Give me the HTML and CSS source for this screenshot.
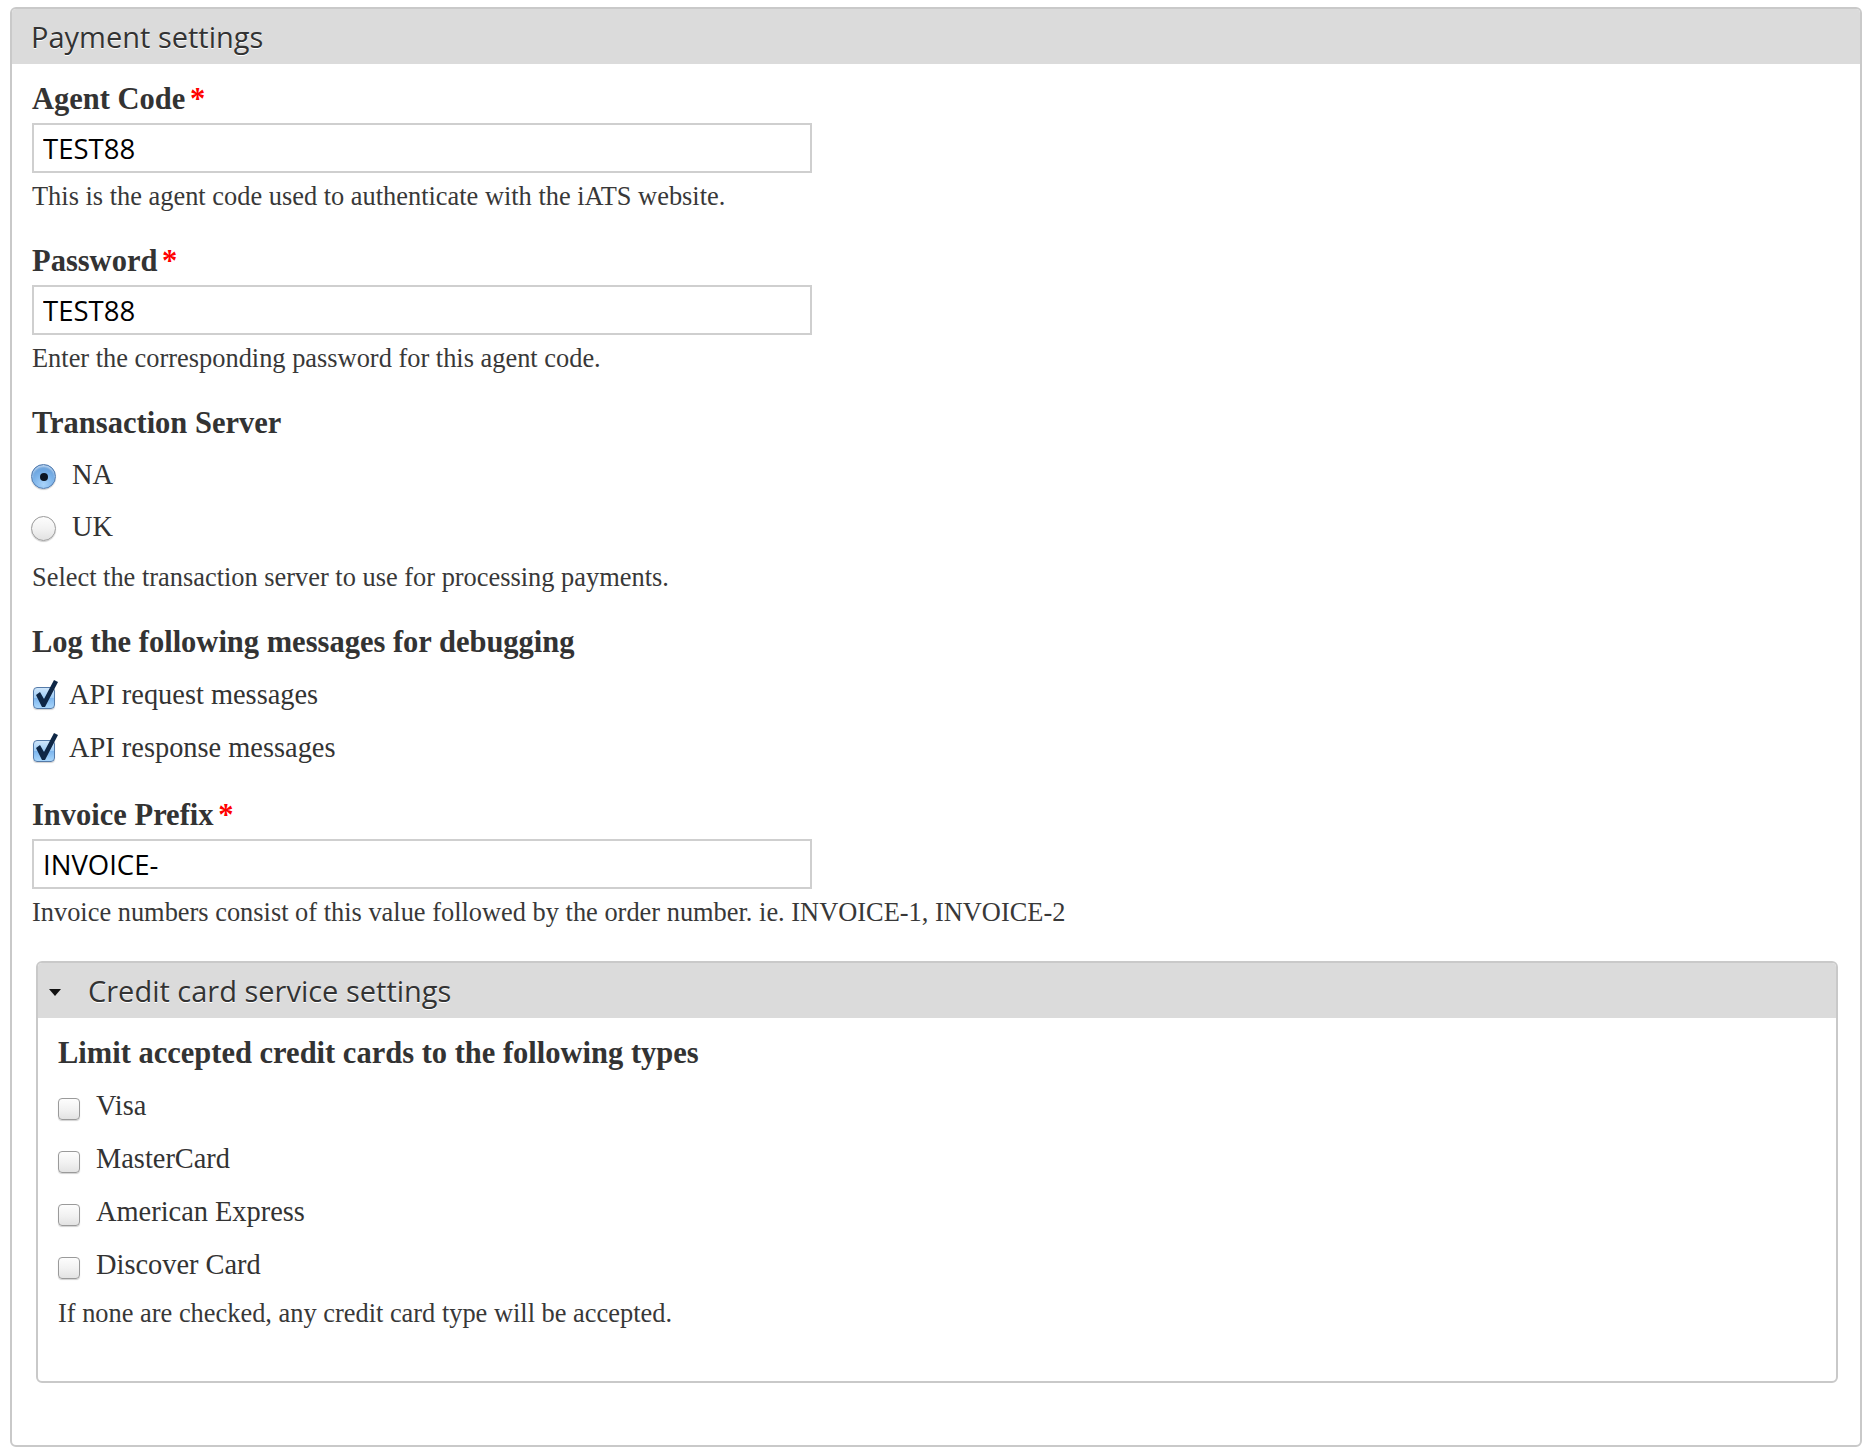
FILE: index.html
```html
<!DOCTYPE html>
<html lang="en">
<head>
<meta charset="utf-8">
<title>Payment settings</title>
<link rel="stylesheet" href="styles.css">
</head>
<body>
<div class="panel">
  <div class="panel-head"><span class="panel-title">Payment settings</span></div>
  <div class="panel-body">

    <div class="item">
      <div class="item-label">Agent Code <span class="req">*</span></div>
      <input class="text-input" type="text" value="TEST88">
      <div class="desc">This is the agent code used to authenticate with the iATS website.</div>
    </div>

    <div class="item">
      <div class="item-label">Password <span class="req">*</span></div>
      <input class="text-input" type="text" value="TEST88">
      <div class="desc">Enter the corresponding password for this agent code.</div>
    </div>

    <div class="item">
      <div class="item-label">Transaction Server</div>
      <div class="option option-radio"><span class="radio radio-on"><span class="dot"></span></span><span class="opt-text">NA</span></div>
      <div class="option option-radio"><span class="radio"></span><span class="opt-text">UK</span></div>
      <div class="desc desc-after-options">Select the transaction server to use for processing payments.</div>
    </div>

    <div class="item item-checks">
      <div class="item-label">Log the following messages for debugging</div>
      <div class="option">
        <span class="cb cb-on"><svg class="tick" viewBox="0 0 24 28" width="24" height="28"><polygon points="2,15 6,12 10,19 20,0 24,2 11,27 8,27" fill="#0f2746"/></svg></span>
        <span class="opt-text">API request messages</span>
      </div>
      <div class="option">
        <span class="cb cb-on"><svg class="tick" viewBox="0 0 24 28" width="24" height="28"><polygon points="2,15 6,12 10,19 20,0 24,2 11,27 8,27" fill="#0f2746"/></svg></span>
        <span class="opt-text">API response messages</span>
      </div>
    </div>

    <div class="item item-last">
      <div class="item-label">Invoice Prefix <span class="req">*</span></div>
      <input class="text-input" type="text" value="INVOICE-">
      <div class="desc">Invoice numbers consist of this value followed by the order number. ie. INVOICE-1, INVOICE-2</div>
    </div>

    <div class="sub-panel">
      <div class="sub-head"><span class="arrow"></span><span class="panel-title">Credit card service settings</span></div>
      <div class="sub-body">
        <div class="item-label">Limit accepted credit cards to the following types</div>
        <div class="option option-sub"><span class="cb"></span><span class="opt-text">Visa</span></div>
        <div class="option option-sub"><span class="cb"></span><span class="opt-text">MasterCard</span></div>
        <div class="option option-sub"><span class="cb"></span><span class="opt-text">American Express</span></div>
        <div class="option option-sub"><span class="cb"></span><span class="opt-text">Discover Card</span></div>
        <div class="desc desc-sub">If none are checked, any credit card type will be accepted.</div>
      </div>
    </div>

  </div>
</div>
</body>
</html>
```

FILE: styles.css
```css
html, body {
  margin: 0;
  padding: 0;
  background: #fff;
}

body {
  font-family: "Liberation Serif", "Times New Roman", serif;
  color: #333;
}

.panel {
  margin: 7px 10px 0 10px;
  border: 2px solid #c9c9c9;
  border-radius: 6px;
  background: #fff;
}

.panel-head {
  height: 55px;
  background: #dbdbdb;
  border-radius: 4px 4px 0 0;
  display: flex;
  align-items: center;
  padding-left: 19px;
}

.panel-title {
  font-family: "Open Sans", "DejaVu Sans", sans-serif;
  font-size: 29px;
  color: #333;
  text-shadow: 0 1px 0 #fff;
}

.panel-body {
  padding: 20px 22px 62px 20px;
}

.item {
  margin-bottom: 35px;
}

.item-checks {
  margin-bottom: 37px;
}

.item-last {
  margin-bottom: 34px;
}

.item-label {
  font-weight: bold;
  font-size: 30.5px;
  line-height: 30px;
  color: #333;
}

.req {
  color: #f00;
  margin-left: -3px;
}

.text-input {
  display: block;
  box-sizing: border-box;
  width: 780px;
  height: 50px;
  margin: 9px 0 0 0;
  padding: 0 9px;
  border: 2px solid #cfcfcf;
  border-radius: 0;
  background: #fff;
  font-family: "Open Sans", "DejaVu Sans", sans-serif;
  font-size: 27.5px;
  color: #000;
  outline: none;
}

.desc {
  margin-top: 8px;
  font-size: 26.4px;
  line-height: 30px;
  color: #383838;
}

.desc-after-options {
  margin-top: 20px;
}

.option {
  display: flex;
  align-items: center;
  height: 30px;
  margin-top: 23px;
  font-size: 28.4px;
  color: #333;
}

.option-radio {
  margin-top: 22px;
}

.opt-text {
  line-height: 30px;
}

.radio {
  box-sizing: border-box;
  width: 25px;
  height: 25px;
  margin: 3px 16px 0 -1px;
  border-radius: 50%;
  border: 1px solid #9a9a9a;
  background: linear-gradient(#fdfdfd, #f2f2f2 50%, #e2e2e2);
  box-shadow: 0 1px 1px rgba(0, 0, 0, 0.2);
  display: flex;
  align-items: center;
  justify-content: center;
  flex: none;
}

.radio-on {
  border-color: #4f79ad;
  background: radial-gradient(circle at 50% 85%, #a9d3fa 0%, #7db4ea 45%, #6aa3de 70%, #5b93d2 100%);
  box-shadow: inset 0 2px 2px rgba(255, 255, 255, 0.55), 0 1px 1px rgba(0, 0, 0, 0.2);
}

.dot {
  width: 8px;
  height: 8px;
  border-radius: 50%;
  background: #0c1624;
}

.cb {
  position: relative;
  box-sizing: border-box;
  width: 22px;
  height: 22px;
  margin: 5px 14px 0 1px;
  border-radius: 4px;
  border: 1px solid #9a9a9a;
  background: linear-gradient(#fdfdfd, #f1f1f1 55%, #e3e3e3);
  box-shadow: 0 1px 1px rgba(0, 0, 0, 0.18);
  flex: none;
}

.cb-on {
  border-color: #557ba9;
  background: linear-gradient(#cfe6fb, #9ccbf5 50%, #7db6ee 51%, #a9d6fb);
}

.tick {
  position: absolute;
  left: 0;
  top: -8px;
  overflow: visible;
}

.sub-panel {
  margin-left: 4px;
  border: 2px solid #c9c9c9;
  border-radius: 6px;
  background: #fff;
}

.sub-head {
  height: 55px;
  background: #dbdbdb;
  border-radius: 4px 4px 0 0;
  display: flex;
  align-items: center;
  padding-left: 11px;
}

.arrow {
  width: 0;
  height: 0;
  border-left: 6px solid transparent;
  border-right: 6px solid transparent;
  border-top: 7px solid #111;
  margin: 4px 27px 0 0;
}

.sub-body {
  padding: 20px 20px 53px 20px;
}

.option-sub .cb {
  margin-left: 0;
  margin-right: 16px;
}

.desc-sub {
  margin-top: 18px;
}
```
